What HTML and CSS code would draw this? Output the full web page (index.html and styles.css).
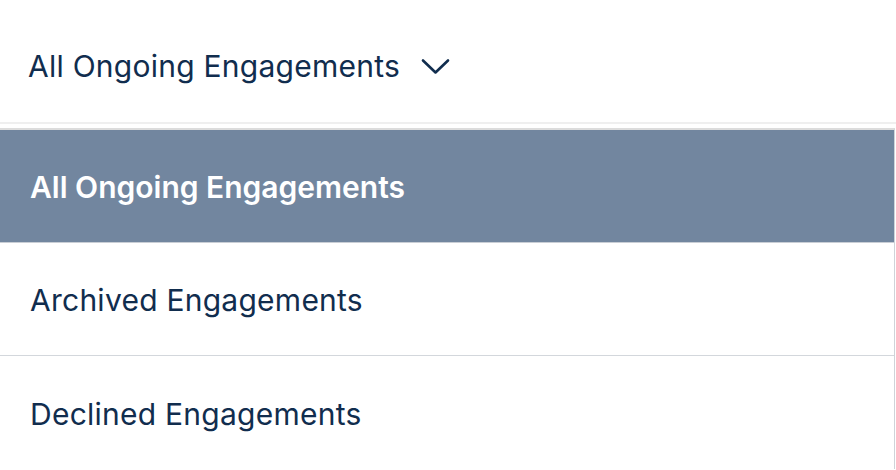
FILE: index.html
```html
<!DOCTYPE html>
<html>
<head>
<meta charset="utf-8">
<link rel="stylesheet" href="styles.css">
</head>
<body>
<div class="page">
  <header class="toggle">
    <span class="toggle-label">All Ongoing Engagements</span>
    <svg class="chevron" width="29" height="17" viewBox="0 0 29 17"><path d="M2 2.5 L14.5 14.5 L27 2.5" fill="none" stroke="#112d4e" stroke-width="2.6" stroke-linecap="round" stroke-linejoin="round"/></svg>
  </header>
  <ul class="menu">
    <li class="item active">All Ongoing Engagements</li>
    <li class="item">Archived Engagements</li>
    <li class="item">Declined Engagements</li>
  </ul>
</div>
</body>
</html>
```
FILE: styles.css
```css
html, body {
  margin: 0;
  padding: 0;
  background: #fff;
}
body {
  font-family: Inter, "Noto Sans", sans-serif;
  color: #112d4e;
  overflow: hidden;
}
.page {
  width: 896px;
}
.toggle {
  height: 124px;
  box-sizing: border-box;
  display: flex;
  align-items: center;
  gap: 21px;
  padding-left: 28px;
  padding-top: 10px;
  border-bottom: 2px solid #efefef;
  margin-bottom: 4px;
}
.toggle-label {
  font-size: 30px;
  font-weight: 400;
  letter-spacing: 0.25px;
}
.chevron {
  display: block;
}
.menu {
  list-style: none;
  margin: 0;
  padding: 0;
  border-top: 2px solid #dcdcdc;
  border-right: 1px solid #cfd3d8;
  margin-right: 1px;
}
.item {
  height: 113px;
  box-sizing: border-box;
  display: flex;
  align-items: center;
  padding-left: 30px;
  padding-top: 2px;
  font-size: 30px;
  letter-spacing: 0.25px;
  border-bottom: 1px solid #d3d7dc;
}
.item:last-child {
  border-bottom: none;
}
.item.active {
  background: #72869f;
  color: #fff;
  font-weight: 600;
  letter-spacing: 0;
  border-bottom-color: #c9ced5;
}
```
